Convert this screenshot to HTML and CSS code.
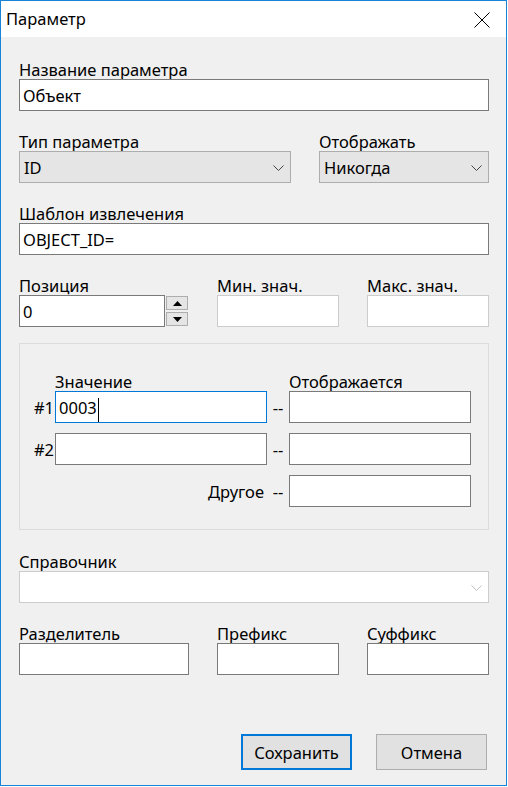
FILE: index.html
```html
<!DOCTYPE html>
<html lang="ru">
<head>
<meta charset="utf-8">
<title>Параметр</title>
<link rel="stylesheet" href="styles.css">
</head>
<body>
<div class="window">
  <div class="titlebar">
    <span class="title">Параметр</span>
    <svg class="close" width="16" height="16" viewBox="0 0 16 16"><path d="M0.5 0.5 L15.5 15.5 M15.5 0.5 L0.5 15.5" stroke="#000" stroke-width="1" fill="none"/></svg>
  </div>
  <div class="content">
    <div class="field">
      <div class="label">Название параметра</div>
      <div class="input">Объект</div>
    </div>

    <div class="row row-gap">
      <div class="field w-type">
        <div class="label">Тип параметра</div>
        <div class="combo"><span>ID</span><svg class="chev" width="11" height="6" viewBox="0 0 11 6"><path d="M0.5 0.5 L5.5 5.5 L10.5 0.5" stroke="#444" fill="none"/></svg></div>
      </div>
      <div class="field w-show">
        <div class="label">Отображать</div>
        <div class="combo"><span>Никогда</span><svg class="chev" width="11" height="6" viewBox="0 0 11 6"><path d="M0.5 0.5 L5.5 5.5 L10.5 0.5" stroke="#444" fill="none"/></svg></div>
      </div>
    </div>

    <div class="field row-gap">
      <div class="label">Шаблон извлечения</div>
      <div class="input">OBJECT_ID=</div>
    </div>

    <div class="row row-gap">
      <div class="field w-pos">
        <div class="label">Позиция</div>
        <div class="pos-wrap">
          <div class="input pos-input">0</div>
          <div class="spin">
            <div class="spin-btn"><svg width="9" height="5" viewBox="0 0 9 5"><path d="M4.5 0 L9 5 L0 5 Z" fill="#000"/></svg></div>
            <div class="spin-btn"><svg width="9" height="5" viewBox="0 0 9 5"><path d="M0 0 L9 0 L4.5 5 Z" fill="#000"/></svg></div>
          </div>
        </div>
      </div>
      <div class="field w-small">
        <div class="label">Мин. знач.</div>
        <div class="input disabled"></div>
      </div>
      <div class="field w-small">
        <div class="label">Макс. знач.</div>
        <div class="input disabled"></div>
      </div>
    </div>

    <div class="group">
      <div class="grid grid-head">
        <div></div>
        <div class="label">Значение</div>
        <div></div>
        <div class="label">Отображается</div>
      </div>
      <div class="grid grid-rows">
        <div class="num">#1</div>
        <div class="input focused">0003<span class="caret"></span></div>
        <div class="dash">--</div>
        <div class="input"></div>

        <div class="num">#2</div>
        <div class="input"></div>
        <div class="dash">--</div>
        <div class="input"></div>

        <div class="other">Другое</div>
        <div class="dash">--</div>
        <div class="input"></div>
      </div>
    </div>

    <div class="field ref-gap">
      <div class="label">Справочник</div>
      <div class="combo combo-disabled"><span></span><svg class="chev" width="11" height="6" viewBox="0 0 11 6"><path d="M0.5 0.5 L5.5 5.5 L10.5 0.5" stroke="#bfbfbf" fill="none"/></svg></div>
    </div>

    <div class="row row-gap">
      <div class="field w-sep">
        <div class="label">Разделитель</div>
        <div class="input"></div>
      </div>
      <div class="field w-small">
        <div class="label">Префикс</div>
        <div class="input"></div>
      </div>
      <div class="field w-small">
        <div class="label">Суффикс</div>
        <div class="input"></div>
      </div>
    </div>

    <div class="buttons">
      <div class="btn btn-default">Сохранить</div>
      <div class="btn">Отмена</div>
    </div>
  </div>
</div>
</body>
</html>
```

FILE: styles.css
```css
* { box-sizing: border-box; }
html, body { margin: 0; padding: 0; background: #ffffff; }
body {
  font-family: "Noto Sans", "Open Sans", sans-serif;
  font-size: 16.5px;
  color: #000;
}
.window {
  width: 507px;
  height: 786px;
  border: 1px solid #1883d7;
  background: #f0f0f0;
  display: flex;
  flex-direction: column;
}
.titlebar {
  height: 36px;
  background: #ffffff;
  display: flex;
  align-items: center;
  justify-content: space-between;
  padding: 0 16px 0 5px;
  flex-shrink: 0;
}
.title { line-height: 20px; }
.close { display: block; margin-top: 1px; }
.content {
  flex: 1;
  display: flex;
  flex-direction: column;
  padding: 22px 17px 0 18px;
}
.field { display: flex; flex-direction: column; }
.label { height: 20px; line-height: 21px; white-space: nowrap; }
.row { display: flex; gap: 28px; }
.row-gap { margin-top: 20px; }
.w-type { width: 272px; }
.w-show { width: 170px; }
.w-pos { width: 170px; }
.w-small { width: 122px; }
.w-sep { width: 170px; }

.input {
  height: 32px;
  border: 1px solid #7a7a7a;
  background: #fff;
  padding: 1px 3px 0;
  line-height: 29px;
  white-space: nowrap;
}
.input.disabled { border-color: #cccccc; }
.input.focused { border-color: #0078d7; }
.caret {
  display: inline-block;
  width: 1px;
  height: 24px;
  background: #000;
  vertical-align: middle;
  margin-left: 1px;
}

.combo {
  height: 32px;
  border: 1px solid #adadad;
  background: #e5e5e5;
  display: flex;
  align-items: center;
  justify-content: space-between;
  padding: 1px 6px 0 4px;
}
.combo-disabled { background: #ffffff; border-color: #cccccc; }
.chev { display: block; }

.pos-wrap { display: flex; gap: 1px; }
.pos-input { width: 146px; }
.spin { display: flex; flex-direction: column; gap: 2px; padding-top: 1px; }
.spin-btn {
  width: 22px;
  height: 14px;
  border: 1px solid #adadad;
  background: #e5e5e5;
  display: flex;
  align-items: center;
  justify-content: center;
}
.spin-btn svg { display: block; }

.group {
  margin-top: 16px;
  height: 187px;
  border: 1px solid #dcdcdc;
  padding: 27px 0 0 0;
}
.grid {
  display: grid;
  grid-template-columns: 35px 212px 22px 182px;
}
.grid-head { height: 20px; }
.grid-rows {
  grid-template-rows: 32px 32px 32px;
  row-gap: 10px;
}
.num { text-align: right; padding-right: 1px; line-height: 33px; }
.dash { text-align: center; line-height: 33px; }
.other { grid-column: 1 / span 2; text-align: right; padding-right: 3px; line-height: 33px; }

.ref-gap { margin-top: 21px; }

.buttons {
  margin-top: 59px;
  display: flex;
  justify-content: flex-end;
  gap: 24px;
  padding-right: 2px;
}
.btn {
  width: 111px;
  height: 36px;
  border: 1px solid #adadad;
  background: #e1e1e1;
  display: flex;
  align-items: center;
  justify-content: center;
}
.btn-default { border: 2px solid #0078d7; }
```
